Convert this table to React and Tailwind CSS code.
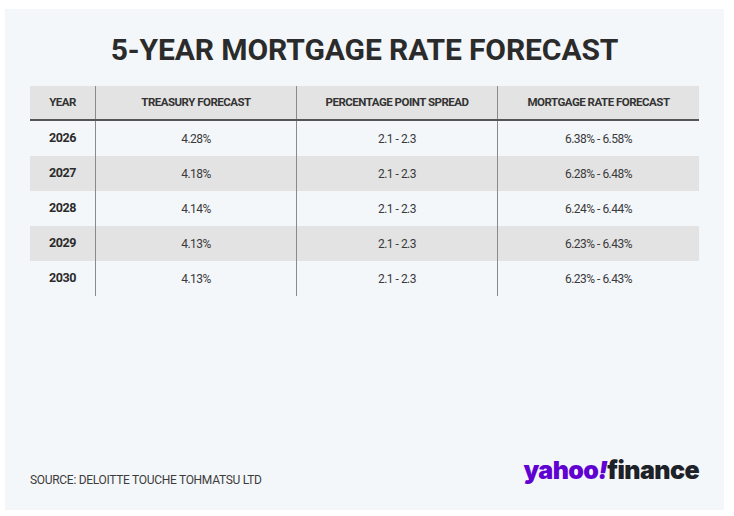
import React from 'react';

const rows = [
    { year: '2026', treasury: '4.28%', spread: '2.1 - 2.3', rate: '6.38% - 6.58%' },
    { year: '2027', treasury: '4.18%', spread: '2.1 - 2.3', rate: '6.28% - 6.48%' },
    { year: '2028', treasury: '4.14%', spread: '2.1 - 2.3', rate: '6.24% - 6.44%' },
    { year: '2029', treasury: '4.13%', spread: '2.1 - 2.3', rate: '6.23% - 6.43%' },
    { year: '2030', treasury: '4.13%', spread: '2.1 - 2.3', rate: '6.23% - 6.43%' },
];

const cols = 'grid grid-cols-[66px_201px_201px_201px]';

export default function App() {
    return (
        <div className="w-[734px] h-[516px] bg-white pt-[9px] pl-[5px] font-['Roboto',sans-serif]">
            <div className="w-[719px] h-[501px] bg-[#f4f7fa] flex flex-col pl-[25px] pr-[25px]">
                <h1 className="mt-[24px] text-center text-[30px] leading-[34px] font-bold text-[#2b2b2b] tracking-[-0.1px]">
                    5-YEAR MORTGAGE RATE FORECAST
                </h1>

                <div className="mt-[19px] w-[669px]">
                    <div className={`${cols} h-[35px] bg-[#e3e3e3] border-b-2 border-[#555] text-[11.5px] font-bold text-[#333] tracking-[-0.5px]`}>
                        <div className="flex items-center justify-center border-r border-[#8a8a8a]">YEAR</div>
                        <div className="flex items-center justify-center border-r border-[#8a8a8a]">TREASURY FORECAST</div>
                        <div className="flex items-center justify-center border-r border-[#8a8a8a]">PERCENTAGE POINT SPREAD</div>
                        <div className="flex items-center justify-center">MORTGAGE RATE FORECAST</div>
                    </div>
                    {rows.map((r, i) => (
                        <div key={r.year} className={`${cols} h-[35px] text-[12px] text-[#3a3a3a] tracking-[-0.5px] ${i % 2 === 1 ? 'bg-[#e3e3e3]' : ''}`}>
                            <div className="flex items-center justify-center border-r border-[#8a8a8a] text-[12.5px] font-bold text-[#2b2b2b] tracking-[-0.4px]">{r.year}</div>
                            <div className="flex items-center justify-center border-r border-[#8a8a8a]">{r.treasury}</div>
                            <div className="flex items-center justify-center border-r border-[#8a8a8a]">{r.spread}</div>
                            <div className="flex items-center justify-center">{r.rate}</div>
                        </div>
                    ))}
                </div>

                <div className="mt-auto mb-[22px] flex items-end justify-between w-[669px]">
                    <span className="text-[12px] text-[#3c3c3c] tracking-[-0.3px] mb-[-1px]">SOURCE: DELOITTE TOUCHE TOHMATSU LTD</span>
                    <span className="text-[25px] leading-[25px] font-black tracking-[-0.6px] font-['Inter',sans-serif] mb-[5px]">
                        <span className="text-[#6001d2]">yahoo</span>
                        <span className="text-[#6001d2] italic">!</span>
                        <span className="text-[#1d2228]">finance</span>
                    </span>
                </div>
            </div>
        </div>
    );
}
